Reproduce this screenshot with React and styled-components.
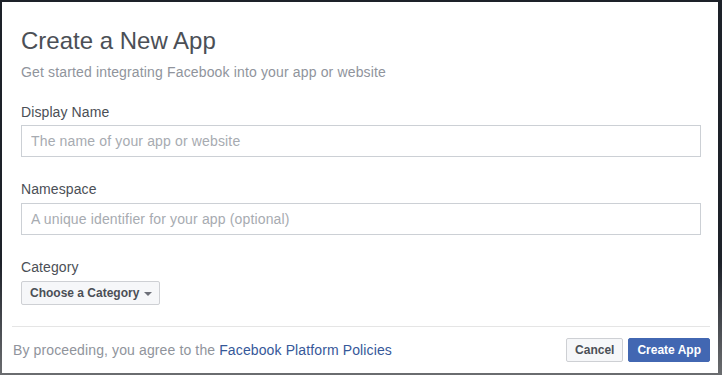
import styled, { createGlobalStyle } from 'styled-components'

const GlobalStyle = createGlobalStyle`
	html, body {
		margin: 0;
		padding: 0;
		background: #1d2129;
	}
	body {
		font-family: "Liberation Sans", Arial, Helvetica, sans-serif;
	}
`;

const Backdrop = styled.div`
	width: 722px;
	height: 375px;
	box-sizing: border-box;
	padding: 2px 4px 2px 2px;
	background: linear-gradient(to bottom, #1d2129 0%, #1d2129 70%, #6b6d70 100%);
`;

const Dialog = styled.div`
	background: #fff;
	height: 100%;
	display: flex;
	flex-direction: column;
`;

const Body = styled.div`
	padding: 24px 17px 0 19px;
	flex: 1;
`;

const Title = styled.h1`
	margin: 0;
	font-size: 24px;
	font-weight: normal;
	color: #4b4f56;
	line-height: 30px;
`;

const Subtitle = styled.p`
	margin: 7px 0 0;
	font-size: 14px;
	letter-spacing: 0.15px;
	color: #90949c;
	line-height: 18px;
`;

const Field = styled.div`
	margin-top: ${props => props.$top}px;
	display: flex;
	flex-direction: column;
`;

const Label = styled.label`
	font-size: 14px;
	letter-spacing: 0.1px;
	color: #4b4f56;
	line-height: 18px;
	margin-bottom: ${props => props.$gap || 4}px;
`;

const Input = styled.input`
	box-sizing: border-box;
	height: 32px;
	width: 100%;
	border: 1px solid #ccd0d5;
	border-radius: 0;
	padding: 0 9px;
	font-family: inherit;
	font-size: 14px;
	letter-spacing: 0.15px;
	color: #1d2129;
	outline: none;
	&::placeholder {
		color: #a7abb1;
	}
`;

const Select = styled.button`
	align-self: flex-start;
	display: flex;
	align-items: center;
	gap: 5px;
	height: 24px;
	box-sizing: border-box;
	padding: 0 7px 0 8px;
	background: #f6f7f9;
	border: 1px solid #ced0d4;
	border-radius: 2px;
	font-family: inherit;
	font-size: 12px;
	font-weight: bold;
	color: #4b4f56;
`;

const Caret = styled.span`
	width: 0;
	height: 0;
	border-left: 4px solid transparent;
	border-right: 4px solid transparent;
	border-top: 4px solid #6d7079;
	margin-top: 1px;
`;

const Footer = styled.div`
	margin: 0 8px 0 10px;
	border-top: 1px solid #e5e5e5;
	height: 46px;
	display: flex;
	align-items: center;
	justify-content: space-between;
	padding: 0 0 0 1px;
`;

const Notice = styled.span`
	font-size: 14px;
	letter-spacing: 0.12px;
	color: #90949c;
	a {
		color: #365899;
		text-decoration: none;
	}
`;

const Actions = styled.div`
	display: flex;
	gap: 5px;
`;

const Button = styled.button`
	height: 24px;
	box-sizing: border-box;
	padding: 0 8px;
	border-radius: 2px;
	font-family: inherit;
	font-size: 12px;
	font-weight: bold;
	border: 1px solid ${props => props.$primary ? '#4267b2' : '#ced0d4'};
	background: ${props => props.$primary ? '#4267b2' : '#f6f7f9'};
	color: ${props => props.$primary ? '#fff' : '#4b4f56'};
`;

function App(){
	return(
		<Backdrop>
			<GlobalStyle />
			<Dialog>
				<Body>
					<Title>Create a New App</Title>
					<Subtitle>Get started integrating Facebook into your app or website</Subtitle>

					<Field $top={22}>
						<Label>Display Name</Label>
						<Input placeholder="The name of your app or website" />
					</Field>

					<Field $top={23}>
						<Label $gap={5}>Namespace</Label>
						<Input placeholder="A unique identifier for your app (optional)" />
					</Field>

					<Field $top={23}>
						<Label $gap={5}>Category</Label>
						<Select>Choose a Category <Caret /></Select>
					</Field>
				</Body>

				<Footer>
					<Notice>By proceeding, you agree to the <a href="#">Facebook Platform Policies</a></Notice>
					<Actions>
						<Button>Cancel</Button>
						<Button $primary>Create App</Button>
					</Actions>
				</Footer>
			</Dialog>
		</Backdrop>
	)
}

export default App
